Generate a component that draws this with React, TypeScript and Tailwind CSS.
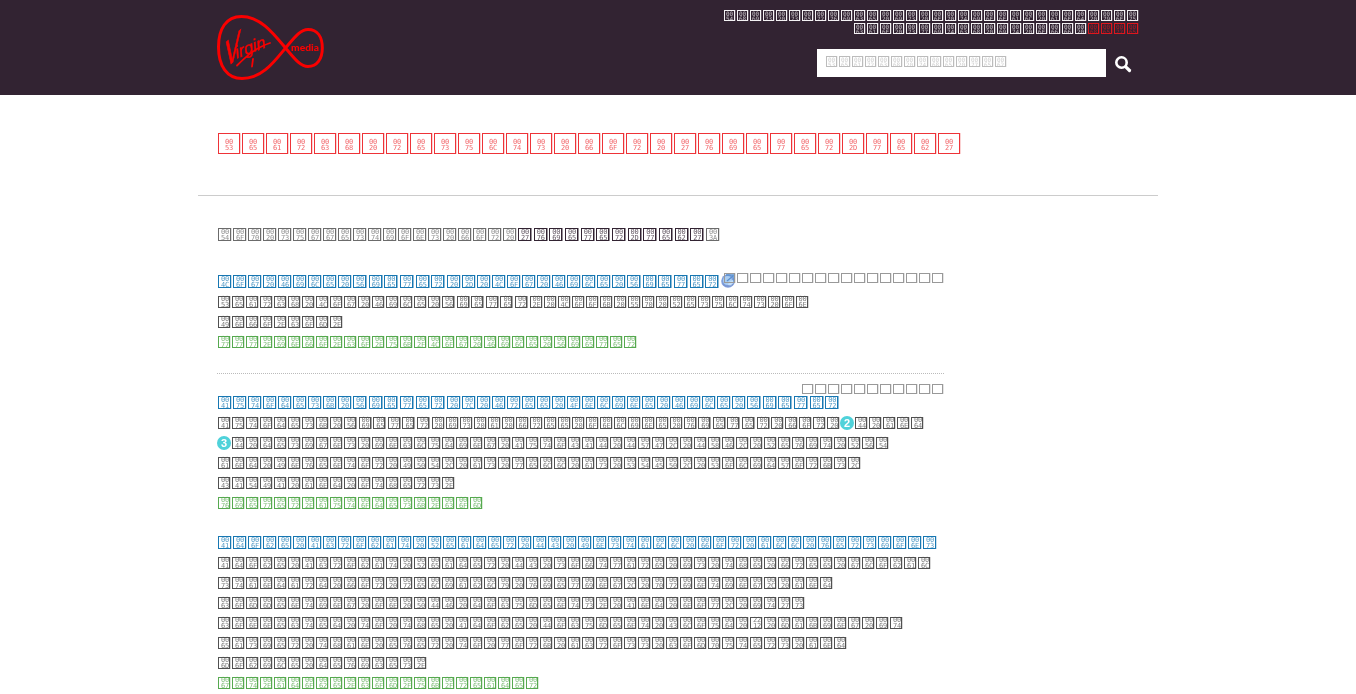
import React from "react";
import clsx from "clsx";

type Size = "xl" | "lg" | "md" | "sm";

const boxSize: Record<Size, string> = {
  xl: "w-[22px] h-[21px] pt-[5px] pl-[6px] leading-[6px]",
  lg: "w-[13px] h-[13px] pl-[2px] leading-[6px]",
  md: "w-[12px] h-[12px] pl-[2px] leading-[5.5px]",
  sm: "w-[11px] h-[11px] pl-[1px] leading-[5px]",
};

const boldBox: Record<Size, string> = {
  xl: "mr-[2px]",
  lg: "mr-[2.67px]",
  md: "mr-[2.6px]",
  sm: "mr-[2px]",
};

function Cell({ char, size, bold }: { char: string; size: Size; bold?: boolean }) {
  const code = char.charCodeAt(0).toString(16).toUpperCase().padStart(4, "0");
  return (
    <span
      className={clsx(
        "block shrink-0 border border-current",
        bold
          ? "shadow-[1px_0_0_color-mix(in_srgb,currentColor_50%,transparent)]"
          : "shadow-[1px_0_0_color-mix(in_srgb,currentColor_22%,transparent)]",
        boxSize[size],
        bold ? boldBox[size] : "mr-[2px]",
      )}
    >
      <span className="block w-2 whitespace-nowrap opacity-75">
        <span className="block">{code.slice(0, 2)}</span>
        <span className="block">{code.slice(2)}</span>
      </span>
    </span>
  );
}

/* Segments wrapped in asterisks are emphasised. */
function Hex({ text, size, className, strong }: { text: string; size: Size; className?: string; strong?: string }) {
  return (
    <span
      className={clsx(
        "flex font-['DejaVu_Sans_Mono',monospace] will-change-transform",
        size === "sm" ? "text-[6px]" : "text-[7px] tracking-[-0.2px]",
        className,
      )}
    >
      {text.split("*").map((part, i) => (
        <span key={i} className={clsx("flex", i % 2 === 1 && strong)}>
          {part.split("").map((c, j) => (
            <Cell key={j} char={c} size={size} bold={i % 2 === 1} />
          ))}
        </span>
      ))}
    </span>
  );
}

function Blanks({ count, className }: { count: number; className: string }) {
  return (
    <span className={clsx("absolute right-px flex gap-[2px]", className)}>
      {Array.from({ length: count }, (_, i) => (
        <span key={i} className="block h-[10px] w-[11px] border border-[#999] shadow-[1px_0_0_#e5e5e5]" />
      ))}
    </span>
  );
}

function Badge({ children }: { children: React.ReactNode }) {
  return (
    <span className="-ml-px flex size-[14px] shrink-0 items-center justify-center rounded-full bg-[#4fd2da] font-['Liberation_Sans',sans-serif] text-[11px] leading-none font-bold text-white will-change-transform">
      {children}
    </span>
  );
}

function Line({ text }: { text: string }) {
  return <Hex text={text} size="md" className="h-5 pt-1 text-[#505050]" />;
}

function Title({ text }: { text: string }) {
  return <Hex text={text} size="lg" className="h-5 pt-[3px] text-[#1777b2]" />;
}

function Url({ text }: { text: string }) {
  return <Hex text={text} size="md" className="h-5 pt-1 text-[#56a94f]" />;
}

function Logo() {
  return (
    <svg width="108" height="66" viewBox="0 0 108 66" fill="none" className="block will-change-transform">
      <path
        d="M68.500 33C56 18 43 1.500 24.500 1.500C9 1.500 1.500 14 1.500 32C1.500 51 10 63.500 25 63.500C45 63.500 57 47 68.500 33C77 23 83 14.500 91 14.500C100.500 14.500 105.300 22 105.300 33C105.300 44 100 51.500 91 51.500C83 51.500 77 43 68.500 33Z"
        stroke="#fa0000"
        strokeWidth="3"
      />
      <g fill="#fa0000" stroke="#fa0000" strokeWidth="0.4" fontFamily="Liberation Sans, sans-serif">
        <text transform="matrix(1.13 -0.98 -0.11 1.99 7.5 54.5)" fontSize="20">
          V
        </text>
        <text
          transform="translate(20 43.500) rotate(-21) skewX(-6)"
          fontSize="17"
          fontStyle="italic"
          textLength="32"
          lengthAdjust="spacingAndGlyphs"
        >
          irgin
        </text>
      </g>
      <text
        x="74"
        y="35.500"
        fill="#fa0000"
        fontFamily="Lato, sans-serif"
        fontSize="9.500"
        fontWeight="900"
        textLength="28"
        lengthAdjust="spacingAndGlyphs"
      >
        media
      </text>
      <path d="M20 50.500C28 42.500 38 33 53 28" stroke="#fa0000" strokeWidth="1.800" strokeLinecap="round" />
      <path d="M36 44L35 51.500" stroke="#fa0000" strokeWidth="1.800" strokeLinecap="round" />
    </svg>
  );
}

function Globe() {
  return (
    <svg width="15" height="15" viewBox="0 0 15 15" className="-mt-[3px] block">
      <circle cx="7" cy="8" r="6.8" fill="#7f9fdc" />
      <circle cx="6.500" cy="7.500" r="4.500" fill="#a9cdf2" />
      <path d="M8 9l4-2 1 2-3 4-3-1z" fill="#c4e0f8" />
      <path d="M2 11c3 3 7 3 10 0" stroke="#7a93d0" fill="none" />
      <path d="M5 2h8v7M6 8l6-5" stroke="#5b91cf" strokeWidth="1.3" fill="none" />
    </svg>
  );
}

export default function App() {
  return (
    <div className="h-[694px] overflow-hidden bg-white font-['Liberation_Sans',sans-serif]">
      <header className="h-[95px] bg-[#322332]">
        <div className="mx-auto flex w-[960px] items-start justify-between pr-[18px] pl-[19px]">
          <div className="pt-[15px]">
            <Logo />
          </div>
          <div className="flex flex-col items-end pt-[10px]">
            <Hex text="This service is optional and you" size="sm" className="h-[13px] text-[#f4f2f4]" />
            <div className="flex h-[13px]">
              <Hex text="can switch it off " size="sm" className="text-[#f4f2f4]" />
              <Hex text="here" size="sm" className="text-[#dd171e]" />
            </div>
            <div className="mt-[13px] flex w-[323px] items-center gap-[9px]">
              <div className="h-[28px] w-[289px] shrink-0 bg-white pt-[7px] pl-[9px]">
                <Hex text="Search the web" size="sm" className="text-[#bcbcbc]" />
              </div>
              <svg width="17" height="17" viewBox="0 0 17 17" fill="none" stroke="white" className="mt-[2px] shrink-0">
                <circle cx="6.500" cy="6.500" r="5.200" strokeWidth="2.600" />
                <path d="M10.800 10.800L14.500 14.500" strokeWidth="3.200" strokeLinecap="round" />
              </svg>
            </div>
          </div>
        </div>
      </header>

      <main className="mx-auto w-[960px]">
        <h1 className="h-[101px] border-b border-[#ccc] pt-[38px] pl-5">
          <Hex text="Search results for 'viewer-web'" size="xl" className="text-[#ee3338]" />
        </h1>

        <div className="ml-[19px] w-[727px]">
          <div className="h-[76px] pt-8 pl-px">
            <Hex
              text="Top suggestions for *'viewer-web'*:"
              size="lg"
              className="text-[#6b6b6b]"
              strong="text-[#322332]"
            />
          </div>

          <article className="relative h-[102px] border-b border-dotted border-[#bbb] pl-px">
            <div className="flex h-5">
              <Title text="Log File *Viewer* - Log File *Viewer*" />
              <div className="pt-1">
                <Globe />
              </div>
            </div>
            <Line text="Search Log File *Viewer*. Look Up Results on" />
            <Line text="Info.com." />
            <Url text="www.info.co.uk/Log File Viewer" />
            <Blanks count={17} className="top-px" />
          </article>

          <article className="relative h-[159px] pt-[19px] pl-px">
            <Blanks count={11} className="top-[10px]" />
            <Title text="Autodesk *Viewer* | Free Online File *Viewer*" />
            <div className="flex h-5">
              <Line text="Autodesk *Viewer* is a free online *viewer* for " />
              <div className="flex pt-[3px] pr-px">
                <Badge>2</Badge>
              </div>
              <Line text="D and" />
            </div>
            <div className="flex h-5">
              <div className="flex pt-[3px] pr-px">
                <Badge>3</Badge>
              </div>
              <Line text="D designs including AutoCAD DWG, DXF, Revit RVT" />
            </div>
            <Line text="and Inventor IPT, as well as STEP, SolidWorks," />
            <Line text="CATIA and others." />
            <Url text="viewer.autodesk.com" />
          </article>

          <article className="pl-px">
            <Title text="Adobe Acrobat Reader DC Install for all versions" />
            <Line text="Adobe Acrobat Reader DC software is the free global" />
            <Line text="standard for reliably viewing, printing, and" />
            <Line text="commenting on PDF documents. And now, it's" />
            <Line text={"connected to the Adobe Document Cloud \u2212 making it"} />
            <Line text="easier than ever to work across computers and" />
            <Line text="mobile devices." />
            <Url text="get.adobe.com/uk/reader" />
          </article>
        </div>
      </main>
    </div>
  );
}
